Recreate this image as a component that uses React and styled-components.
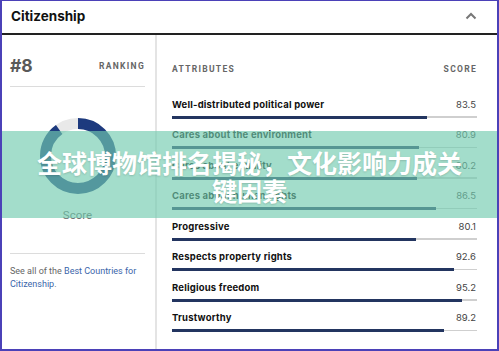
import React from "react";
import styled, { createGlobalStyle } from "styled-components";

const Global = createGlobalStyle`
  html, body { margin: 0; padding: 0; background: #fff; }
  * { box-sizing: border-box; }
`;

const Frame = styled.div`
  position: relative;
  width: 499px;
  height: 351px;
  border: 2px solid #4b41b8;
  border-top-width: 1px;
  overflow: hidden;
  background: #fff;
  font-family: Inter, "Noto Sans", sans-serif;
`;

const Header = styled.div`
  height: 34px;
  display: flex;
  align-items: center;
  justify-content: space-between;
  padding: 0 20px 2px 9px;
  border-bottom: 2px solid #222;
`;

const Title = styled.h1`
  margin: 0;
  font-size: 13.5px;
  font-weight: 700;
  color: #111;
`;

const Body = styled.div`
  display: grid;
  grid-template-columns: 155px 1fr;
  height: calc(100% - 34px);
`;

const LeftCol = styled.div`
  border-right: 2px solid #e4e4e4;
  padding: 0 10px 0 8px;
  display: flex;
  flex-direction: column;
`;

const RankRow = styled.div`
  display: flex;
  align-items: center;
  justify-content: space-between;
  padding: 21px 0 10px;
  border-bottom: 1.5px solid #dcdcdc;
`;

const Rank = styled.div`
  font-size: 17.5px;
  line-height: 20px;
  font-weight: 700;
  color: #595959;
`;

const Caps = styled.div`
  font-family: Roboto, "Noto Sans", sans-serif;
  font-size: 8.5px;
  line-height: 12px;
  font-weight: 700;
  letter-spacing: 1.3px;
  color: #666;
  text-align: ${(p) => (p.$right ? "right" : "left")};
`;

const DonutBox = styled.div`
  display: flex;
  flex-direction: column;
  align-items: center;
  padding: 29px 0 31px;
  border-bottom: 1.5px solid #dcdcdc;
`;

const ScoreLabel = styled.div`
  margin-top: 12px;
  font-family: Roboto, sans-serif;
  font-size: 11.5px;
  line-height: 14px;
  color: #666;
`;

const Note = styled.p`
  margin: 0;
  padding-top: 11px;
  font-family: Roboto, sans-serif;
  font-size: 9px;
  line-height: 12.5px;
  color: #666;
`;

const Link = styled.a`
  color: #3a65aa;
  text-decoration: none;
`;

const RightCol = styled.div`
  padding: 28px 20px 0 15px;
`;

const HeadRow = styled.div`
  display: flex;
  justify-content: space-between;
  margin-bottom: 22px;
`;

const Row = styled.div`
  height: 30.5px;
`;

const RowTop = styled.div`
  display: flex;
  justify-content: space-between;
  align-items: center;
  height: 14px;
  margin-bottom: 4.5px;
`;

const Label = styled.span`
  font-size: 9.5px;
  font-weight: 700;
  letter-spacing: 0.2px;
  color: #111;
`;

const Value = styled.span`
  font-size: 9.5px;
  color: #444;
  margin-right: 1px;
`;

const Track = styled.div`
  position: relative;
  height: 3px;
  display: flex;
  align-items: center;
  &::before {
    content: "";
    position: absolute;
    left: 0;
    right: 0;
    height: 1.5px;
    background: #cfcfcf;
  }
`;

const Fill = styled.div`
  position: relative;
  height: 3px;
  background: #233560;
`;

const Overlay = styled.div`
  position: absolute;
  left: 0;
  right: 0;
  top: 130px;
  height: 87px;
  background: rgba(114, 203, 175, 0.65);
  display: flex;
  align-items: center;
  justify-content: center;
`;

const Headline = styled.div`
  max-width: 440px;
  text-align: center;
  font-family: "Noto Sans CJK SC", sans-serif;
  font-size: 25px;
  line-height: 28px;
  font-weight: 700;
  color: #fff;
  text-shadow: 0 1px 2px rgba(0, 0, 0, 0.15);
  margin-top: 2px;
`;

const rows = [
  ["Well-distributed political power", 83.5],
  ["Cares about the environment", 80.9],
  ["Cares about equality", 80.2],
  ["Cares about human rights", 86.5],
  ["Progressive", 80.1],
  ["Respects property rights", 92.6],
  ["Religious freedom", 95.2],
  ["Trustworthy", 89.2],
];

function Donut({ value }) {
  const r = 32.5;
  const c = 2 * Math.PI * r;
  return (
    <svg width="80" height="80" viewBox="0 0 80 80">
      <circle cx="40" cy="40" r={r} fill="none" stroke="#e9e9e9" strokeWidth="11" />
      <circle
        cx="40"
        cy="40"
        r={r}
        fill="none"
        stroke="#1d3a7e"
        strokeWidth="11"
        strokeDasharray={`${(c * value) / 100} ${c}`}
        transform="rotate(-90 40 40)"
      />
    </svg>
  );
}

export default function App() {
  return (
    <>
      <Global />
      <Frame>
        <Header>
          <Title>Citizenship</Title>
          <svg width="12" height="8" viewBox="0 0 12 8">
            <path d="M1.5 6.5 L6 2 L10.5 6.5" fill="none" stroke="#777" strokeWidth="2" />
          </svg>
        </Header>
        <Body>
          <LeftCol>
            <RankRow>
              <Rank>#8</Rank>
              <Caps $right>RANKING</Caps>
            </RankRow>
            <DonutBox>
              <Donut value={90} />
              <ScoreLabel>Score</ScoreLabel>
            </DonutBox>
            <Note>
              See all of the <Link>Best Countries for Citizenship</Link>.
            </Note>
          </LeftCol>
          <RightCol>
            <HeadRow>
              <Caps>ATTRIBUTES</Caps>
              <Caps $right>SCORE</Caps>
            </HeadRow>
            {rows.map(([label, v]) => (
              <Row key={label}>
                <RowTop>
                  <Label>{label}</Label>
                  <Value>{v}</Value>
                </RowTop>
                <Track>
                  <Fill style={{ width: `${v}%` }} />
                </Track>
              </Row>
            ))}
          </RightCol>
        </Body>
        <Overlay>
          <Headline>全球博物馆排名揭秘，文化影响力成关键因素</Headline>
        </Overlay>
      </Frame>
    </>
  );
}
